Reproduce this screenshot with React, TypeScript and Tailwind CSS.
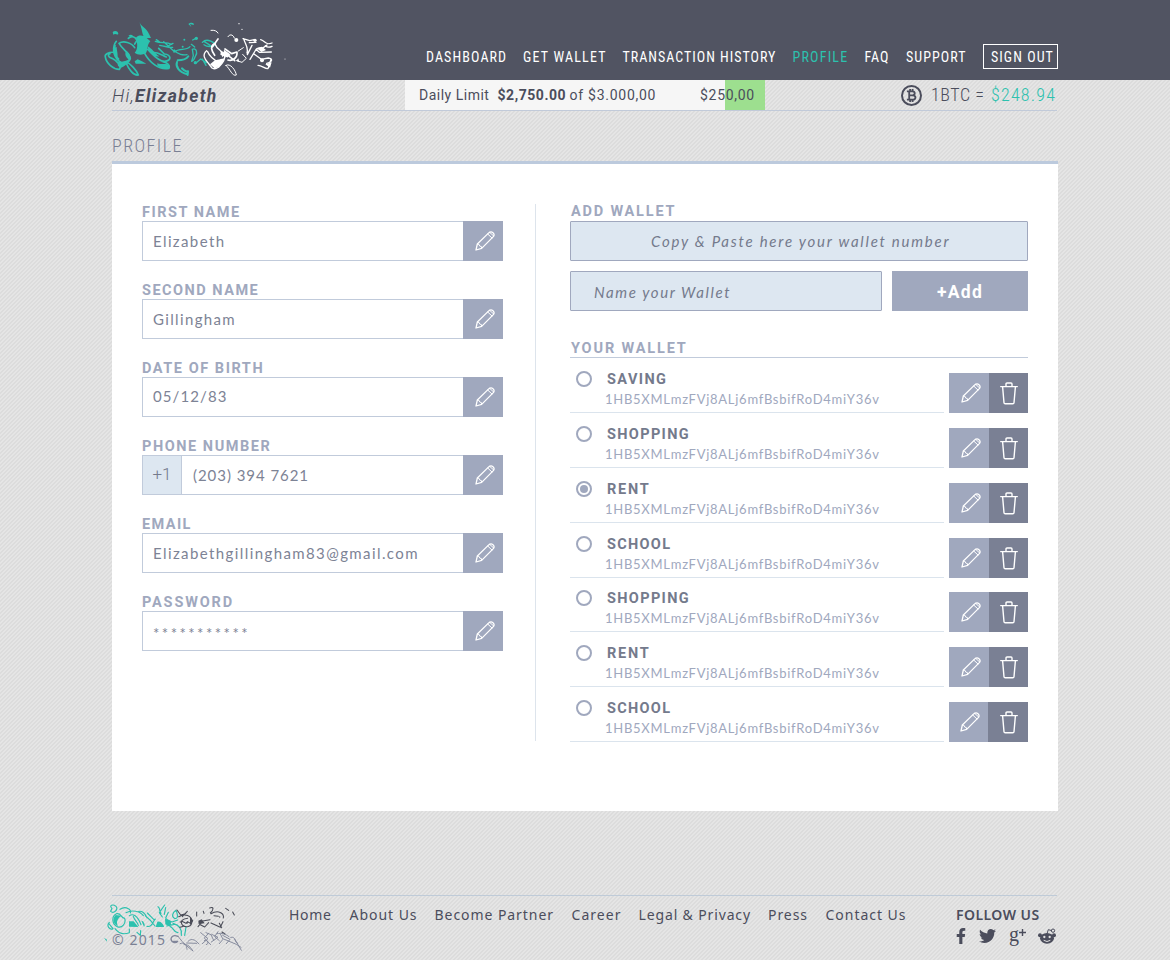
import { FaFacebookF, FaTwitter } from "react-icons/fa";

const navItems = [
  { label: "DASHBOARD", cls: "w-[97px] tracking-[1.1px]" },
  { label: "GET WALLET", cls: "w-[99.5px] tracking-[1.2px]" },
  { label: "TRANSACTION HISTORY", cls: "w-[170px] tracking-[1px]" },
  { label: "PROFILE", cls: "w-[72px] tracking-[1.2px] text-[#2cc1ae]" },
  { label: "FAQ", cls: "w-[41.5px] tracking-[1px]" },
  { label: "SUPPORT", cls: "w-[77px] tracking-[1.05px]" },
];

const fields = [
  { label: "FIRST NAME", value: "Elizabeth", cls: "tracking-[1.38px]", lab: "tracking-[1.5px]" },
  { label: "SECOND NAME", value: "Gillingham", cls: "tracking-[1.35px]", lab: "tracking-[1.5px]" },
  { label: "DATE OF BIRTH", value: "05/12/83", cls: "tracking-[1.1px] pb-0.5", lab: "tracking-[1.55px]" },
  { label: "PHONE NUMBER", value: "(203) 394 7621", prefix: "+1", cls: "tracking-[0.95px]", lab: "tracking-[1.55px]" },
  { label: "EMAIL", value: "Elizabethgillingham83@gmail.com", cls: "tracking-[1.4px]", lab: "tracking-[1.4px]" },
  { label: "PASSWORD", value: "***********", cls: "tracking-[2.45px] pt-1", lab: "tracking-[1.85px]" },
];

const hash = "1HB5XMLmzFVj8ALj6mfBsbifRoD4miY36v";
const wallets = [
  { name: "SAVING", row: "h-[55px]", cls: "tracking-[1.4px]" },
  { name: "SHOPPING", row: "h-[55px]", cls: "tracking-[1.35px]" },
  { name: "RENT", row: "h-[55px]", cls: "tracking-[1.8px]", selected: true },
  { name: "SCHOOL", row: "h-[54px]", cls: "tracking-[1.3px]" },
  { name: "SHOPPING", row: "h-[55px]", cls: "tracking-[1.35px]" },
  { name: "RENT", row: "h-[55px]", cls: "tracking-[1.8px]" },
  { name: "SCHOOL", row: "h-[55px]", cls: "tracking-[1.3px]" },
];

const footerLinks = [
  { label: "Home", cls: "w-[60.5px] tracking-[0.72px]" },
  { label: "About Us", cls: "w-[85px] tracking-[0.96px]" },
  { label: "Become Partner", cls: "w-[137px] tracking-[0.94px]" },
  { label: "Career", cls: "w-[67px] tracking-[1.04px]" },
  { label: "Legal & Privacy", cls: "w-[129.5px] tracking-[0.86px]" },
  { label: "Press", cls: "w-[57.5px] tracking-[0.93px]" },
  { label: "Contact Us", cls: "w-[130.5px] tracking-[0.97px]" },
];

function Pencil() {
  return (
    <svg viewBox="0 0 60 60" className="ml-[3px] h-5 w-5 shrink-0" fill="none" stroke="#fff" strokeWidth="3.8" strokeLinejoin="round" strokeLinecap="round">
      <path d="M3 57 L7 39 L42 5 Q48 0 54 5 Q60 10 55 17 L20 52 Z" />
      <path d="M7 39 Q14 38 14 45 Q22 45 20 52 M38 9 L51 21 M44 4 L56 15" strokeWidth="3" />
    </svg>
  );
}

function Trash() {
  return (
    <svg viewBox="0 0 18 23" className="ml-px h-[23px] w-[18px] shrink-0" fill="none" stroke="#fff" strokeWidth="1.4" strokeLinejoin="round" strokeLinecap="round">
      <path d="M.7 4.6H17.3M6 4.4V2Q6 1 7 1H11Q12 1 12 2V4.4M2.6 4.8L4 20.7Q4.1 21.8 5.2 21.8H12.8Q13.9 21.8 14 20.7L15.4 4.8" />
    </svg>
  );
}

function HeaderLogo() {
  return (
    <svg viewBox="0 0 570 195" className="mt-[15px] h-[65px] w-[190px] shrink-0" fill="none" strokeLinecap="round" strokeLinejoin="round">
      <g stroke="#2cc1ae" strokeWidth="5">
        <path d="M45 92C41 106 45 122 56 132M45 112C25 110 13 118 16 126C19 145 40 163 58 163C66 154 52 138 36 130C24 127 22 118 30 116M49 79C39 91 35 119 58 139C72 151 85 146 91 130C88 114 70 106 57 85C70 76 95 83 104 98" />
        <path d="M77 141C91 144 111 168 115 180C101 183 86 163 77 141ZM85 70C94 61 105 64 111 76L104 87" />
        <path d="M143 103C157 116 174 140 194 139C217 137 213 119 193 117L176 100M134 115C147 140 177 167 207 160C211 149 201 143 189 140M154 112C176 110 188 123 199 126" />
        <path d="M166 79C184 86 198 80 215 88M179 91C198 94 205 98 218 97M191 80L221 108M169 74L179 81M222 111C239 97 257 109 270 95M223 105C232 120 251 121 261 119M204 93L219 85" strokeWidth="4" />
        <path d="M231 141C226 155 237 171 262 178M233 136C247 136 260 132 265 124M263 180L264 169M246 160C251 167 257 169 263 171" strokeWidth="6" />
        <path d="M277 103C289 97 294 114 286 124C281 138 279 139 275 139L280 122ZM274 88L284 96M307 82C319 69 334 78 345 85C344 95 324 98 312 89M313 80L331 91M289 143L302 132L320 143M278 75L288 70M307 132L318 151" strokeWidth="4" />
      </g>
      <g fill="#2cc1ae">
        <path d="M118 20C123 35 140 38 147 57L153 69L134 69C125 55 127 43 118 20ZM108 68C115 58 134 61 141 70L151 79C139 91 145 107 137 115C125 122 111 119 104 113C115 101 112 85 108 68ZM79 107C72 117 78 130 91 136C94 123 89 115 79 107ZM104 139L113 133L126 139L139 146H107ZM38 51C44 45 55 47 55 57C51 62 47 53 40 59ZM85 63C92 56 101 61 99 67ZM265 27C272 20 285 23 281 30L270 27L274 36ZM41 99C35 109 42 121 51 132C56 120 50 108 50 96ZM58 139C50 145 52 155 62 159C74 155 86 144 91 130C80 138 68 142 58 139ZM143 94C158 102 162 113 178 124C163 128 144 113 143 94ZM172 145C182 150 204 143 210 153C208 163 188 164 172 152Z" />
        <circle cx="253" cy="74" r="3" /><circle cx="289" cy="70" r="5" /><circle cx="248" cy="95" r="3" /><circle cx="286" cy="143" r="5" />
      </g>
      <g stroke="#fff" strokeWidth="4">
        <path d="M320 107C305 119 315 133 323 142L336 159C349 166 362 154 358 143C345 136 329 126 323 110M345 87C352 108 366 105 374 119C378 137 361 151 355 157" />
        <path d="M346 85C328 92 335 108 344 121M354 72L337 96M375 102L395 116L411 111C413 129 397 139 384 135M380 118L404 137M363 117C370 119 379 130 389 120" strokeWidth="5" />
        <path d="M378 151C391 143 407 166 409 180C397 185 391 163 378 151ZM333 46Q349 44 354 54M384 65C387 58 399 56 403 69M415 108L430 98M428 118L439 130L426 142L410 137" strokeWidth="3" />
        <path d="M431 71C436 91 446 95 441 114M429 71L449 77L463 74M448 83L468 82M456 91L442 119M450 133L469 102L481 99M462 117L484 133L505 129C519 131 518 140 500 145M468 103L478 112L514 111M482 74C497 78 496 92 516 84M474 151C486 151 494 162 504 161L513 133M496 92C502 98 512 96 516 94M487 100L501 90" />
      </g>
      <g fill="#fff">
        <circle cx="409" cy="75" r="6" /><circle cx="486" cy="136" r="6" /><circle cx="465" cy="76" r="5" /><circle cx="426" cy="43" r="2" /><circle cx="417" cy="26" r="2" /><circle cx="555" cy="132" r="1.5" />
        <path d="M342 138C355 131 371 134 378 126L362 150L345 161L330 148ZM372 104L390 117L382 128L370 118ZM470 99L486 95L498 105L484 111ZM409 137L415 130L418 142ZM360 107L377 115L367 127ZM496 148L515 142L510 158Z" />
      </g>
    </svg>
  );
}

function FooterLogo() {
  return (
    <svg viewBox="0 0 420 150" className="absolute -left-2 top-2 h-[50px] w-[140px]" fill="none" strokeLinecap="round" strokeLinejoin="round">
      <g stroke="#2cc1ae" strokeWidth="3.5">
        <path d="M24 13C14 5 26-1 36 7C44 14 31 32 20 22ZM38 29C21 36 24 61 40 68C54 74 67 58 62 43C49 41 53 27 38 29M16 55C6 65 17 79 27 74L14 58M33 74C42 86 56 94 76 86L76 75" />
        <path d="M48 16C66 4 83 17 79 27M66 26C83 17 108 21 118 35M76 35C87 28 100 34 111 62M102 23C113 18 124 28 129 41M124 35C136 44 142 51 153 66M130 27L149 46M129 67C145 72 147 50 154 45M99 85L109 94L110 80M88 37C91 49 102 55 103 64" />
        <path d="M162 8C170 12 164 21 171 28M182 3L166 26L175 39M185 11L181 31M193 25L185 42L200 61M216 19C204 27 202 39 213 44C225 44 220 28 216 19M198 67C209 70 210 88 222 86M207 58C225 63 235 74 232 94M221 48L204 54L190 47M246 69L242 94M188 66L211 61" />
      </g>
      <g fill="#2cc1ae"><path d="M35 33C23 45 29 62 42 66C35 53 42 42 52 35ZM75 52H89L103 69L75 68ZM160 53C169 49 181 63 180 69L155 69ZM183 44L202 53L196 67L184 61ZM0 102L8 106L9 113ZM112 50C119 49 126 65 120 68Z" /></g>
      <g stroke="#4b4d58" strokeWidth="3.2">
        <path d="M219 18L230 33L245 29M224 38C244 27 262 36 264 51C264 70 245 72 235 63C226 50 240 44 251 43M232 51L246 58M250 22L235 38M278 24V36M298 22L300 28M317 12C330 7 330 17 319 27M321 29C343 16 361 28 358 42M282 68L296 51L318 47M289 62L302 69L314 56M321 57L349 70L357 53M353 71L346 58M365 13L374 19M386 24L391 33M354 84L363 90M330 35L343 37M250 53L258 57M228 70L239 67" />
      </g>
      <g fill="#4b4d58"><circle cx="229" cy="54" r="2" /><circle cx="249" cy="56" r="3" /><circle cx="347" cy="39" r="2" /><path d="M258 38L268 50L258 64ZM283 50L293 46L302 58L284 60Z" /></g>
      <g stroke="#81869a" strokeWidth="2.8">
        <path d="M222 97L235 113L246 124L267 141M228 119C240 112 249 125 249 136M240 121C251 119 261 131 266 140M252 112C265 99 277 111 285 120M248 117L278 118M290 86L312 104L295 119M314 88L301 102L320 122M323 91L342 100L322 114M342 83L332 98L346 110M349 90L357 106L346 119M356 94L378 106L367 119M380 100C397 96 389 114 401 118M392 105L412 139M359 105L397 121L411 130M301 109C313 106 316 121 307 122M339 89C354 86 365 90 375 98M306 86L321 92L329 109" />
        <path d="M222 97C209 92 201 97 201 105C202 116 216 119 221 112H209" strokeWidth="4" />
      </g>
    </svg>
  );
}

export default function App() {
  return (
    <div className="h-[960px] w-[1170px] overflow-hidden bg-[#e1e1e1] bg-[linear-gradient(135deg,#dcdcdc_25%,#e5e5e5_25%,#e5e5e5_50%,#dcdcdc_50%,#dcdcdc_75%,#e5e5e5_75%)] bg-[length:4px_4px] font-['Roboto',sans-serif] text-[#4b4d5c]">
      <header className="flex h-20 bg-[#515462] pl-[100px] pr-28">
        <HeaderLogo />
        <nav className="ml-[136px] mt-[44px] flex h-[25px] text-[14px] leading-[27px] text-white [font-stretch:80%]">
          {navItems.map((n) => (
            <a key={n.label} className={`shrink-0 whitespace-nowrap ${n.cls}`}>{n.label}</a>
          ))}
          <a className="h-[25px] w-[75px] shrink-0 whitespace-nowrap border border-white pl-[7px] leading-[25px] tracking-[1.05px]">SIGN OUT</a>
        </nav>
      </header>

      <div className="ml-[112px] mr-[113px] flex h-[31px] border-b border-[#c1cad9]">
        <div className="w-[293px] whitespace-nowrap text-[18px] italic leading-[31px]">
          <span className="font-light tracking-[1.1px]">Hi,</span>
          <b className="text-[17.5px] tracking-[1.4px]">Elizabeth</b>
        </div>
        <div className="flex h-[30px] w-[360px] bg-[linear-gradient(90deg,#f6f6f6_320px,#9ddf8f_320px)] pl-3.5 text-[14px] leading-[31px]">
          <span className="w-[78.5px] tracking-[0.5px]">Daily Limit</span>
          <b className="w-[72px] tracking-[0.55px]">$2,750.00</b>
          <span className="w-[130.5px] tracking-[0.74px]">of $3.000,00</span>
          <span className="tracking-[0.7px]">$250,00</span>
        </div>
        <div className="ml-auto flex items-center whitespace-nowrap text-[18px] leading-[30px] [font-stretch:80%]">
          <span className="mr-[9px] flex h-[21px] w-[21px] items-center justify-center rounded-full border-2 border-[#4b4d5c]">
            <svg viewBox="0 0 12 14" className="h-[13px] w-[11px]" fill="none" stroke="#4b4d5c" strokeWidth="2">
              <path d="M1 2.5H7Q9.5 2.5 9.5 4.6Q9.5 6.8 7 6.8H3.5V2.5M1 11.5H7.3Q10.3 11.5 10.3 9.1Q10.3 6.8 7 6.8M3.5 6.8V11.5M4.5 0V2.5M7.2 0V2.5M4.5 11.5V14M7.2 11.5V14" />
            </svg>
          </span>
          <span className="w-[60px] tracking-[0.55px] [font-weight:350]">1BTC =</span>
          <span className="w-[66px] tracking-[1.2px] text-[#2cc1ae] [font-weight:350]">$248.94</span>
        </div>
      </div>

      <h1 className="mx-[112px] h-[53px] border-b-[3px] border-[#bccadd] pt-[22px] text-[18px] leading-[26px] tracking-[1.45px] text-[#7a8094] [font-stretch:80%] [font-weight:350]">PROFILE</h1>

      <main className="mx-[112px] flex h-[647px] bg-white pl-[30px] pr-[30px] pt-[41px] text-[#747a8c]">
        <section className="w-[361px]">
          {fields.map((f) => (
            <div key={f.label} className="h-[78px]">
              <label className={`block h-4 text-[14.5px] font-bold leading-[15px] text-[#a0a8be] ${f.lab}`}>{f.label}</label>
              <div className="flex h-10">
                {f.prefix && <span className="flex w-10 items-center justify-center border border-[#c1cbdb] bg-[#dde7f1] text-[17px] font-light">{f.prefix}</span>}
                <div className={`flex flex-1 items-center border border-r-0 border-[#c1cbdb] font-['Lato',sans-serif] text-[15px] text-[#7d8395] ${f.prefix ? "border-l-0 pl-[11px]" : "pl-2.5"} ${f.cls}`}>{f.value}</div>
                <button className="flex w-10 items-center justify-center bg-[#a0a8be]"><Pencil /></button>
              </div>
            </div>
          ))}
        </section>

        <div className="-mt-px ml-8 h-[537px] w-px bg-[#dde4ec]" />

        <section className="ml-[34px] w-[458px]">
          <h2 className="h-4 pl-px text-[14.5px] font-bold leading-[13px] tracking-[1.8px] text-[#a0a8be]">ADD WALLET</h2>
          <div className="flex h-10 items-center rounded-[1px] border border-[#a0a8be] bg-[#dde7f1] pl-20 font-['Lato',sans-serif] text-[15px] italic tracking-[1.76px]">Copy &amp; Paste here your wallet number</div>
          <div className="mt-2.5 flex h-10 gap-2.5">
            <div className="flex w-[312px] items-center rounded-[1px] border border-[#a0a8be] bg-[#dde7f1] pl-[23px] pt-0.5 font-['Lato',sans-serif] text-[15px] italic tracking-[1.6px]">Name your Wallet</div>
            <button className="flex w-[136px] items-center justify-center bg-[#a0a8be] pt-0.5 text-[17.5px] font-bold tracking-[1.3px] text-white">+Add</button>
          </div>
          <h2 className="mt-[29px] h-[18px] border-b border-[#c1cbdb] pl-px text-[14.5px] font-bold leading-[17px] tracking-[1.85px] text-[#a0a8be]">YOUR WALLET</h2>
          <ul>
            {wallets.map((w, i) => (
              <li key={i} className={`flex ${w.row}`}>
                <div className="flex h-[55px] w-[374px] border-b border-[#dbe4ed] pl-1.5">
                  <span className="mt-[13px] flex h-4 w-4 items-center justify-center rounded-full border-2 border-[#a0a8be]">
                    {w.selected && <i className="h-2 w-2 rounded-full bg-[#a0a8be]" />}
                  </span>
                  <div className="ml-[15px] pt-[14px]">
                    <b className={`block text-[14.5px] leading-4 ${w.cls}`}>{w.name}</b>
                    <span className="-ml-0.5 block pt-0.5 font-['Lato',sans-serif] text-[13px] leading-[18px] tracking-[0.73px] text-[#a0a8be]">{hash}</span>
                  </div>
                </div>
                <div className="ml-[5px] mt-[15px] flex h-10 w-[79px]">
                  <button className={`flex items-center justify-center bg-[#a0a8be] ${i === 6 ? "w-[39px]" : "w-10"}`}><Pencil /></button>
                  <button className="flex flex-1 items-center justify-center bg-[#7a8094]"><Trash /></button>
                </div>
              </li>
            ))}
          </ul>
        </section>
      </main>

      <footer className="relative ml-[112px] mr-[113px] mt-[84px] flex h-[65px] border-t border-[#bfcbd8] pt-2 font-['Noto_Sans',sans-serif] text-[14px] leading-[22px]">
        <FooterLogo />
        <span className="mt-[25px] w-[177px] text-[14px] tracking-[1.14px] text-[#7a8094]">© 2015</span>
        {footerLinks.map((l) => (
          <a key={l.label} className={`shrink-0 whitespace-nowrap ${l.cls}`}>{l.label}</a>
        ))}
        <div className="w-[101px] shrink-0">
          <p className="whitespace-nowrap text-[14px] font-semibold leading-[22px] tracking-[0.45px]">FOLLOW US</p>
          <div className="mt-px flex h-[18px] items-center text-[#4b4d5c]">
            <FaFacebookF className="h-4 w-[10px]" />
            <FaTwitter className="ml-[13px] h-[18px] w-[17px]" />
            <span className="-mt-1 ml-[13px] h-[15px] font-['Liberation_Serif',serif] text-[20px] leading-[14px]">g</span>
            <svg viewBox="0 0 7 7" className="-mt-2 h-[7px] w-[7px]"><path d="M3.5 0V7M0 3.5H7" stroke="#4b4d5c" strokeWidth="1.4" /></svg>
            <svg viewBox="0 0 54 48" className="ml-3 h-4 w-[18px]" fill="#4b4d5c">
              <ellipse cx="27" cy="31" rx="21" ry="16" /><circle cx="6" cy="22" r="6" /><circle cx="48" cy="22" r="6" />
              <path d="M27 17L31 5L42 8" fill="none" stroke="#4b4d5c" strokeWidth="3" />
              <circle cx="45" cy="8" r="5" fill="none" stroke="#4b4d5c" strokeWidth="3" />
              <g fill="#e1e1e1"><circle cx="19" cy="27" r="3.5" /><circle cx="35" cy="27" r="3.5" /></g>
              <path d="M17 37Q27 44 37 37" fill="none" stroke="#e1e1e1" strokeWidth="3" />
            </svg>
          </div>
        </div>
      </footer>
    </div>
  );
}
